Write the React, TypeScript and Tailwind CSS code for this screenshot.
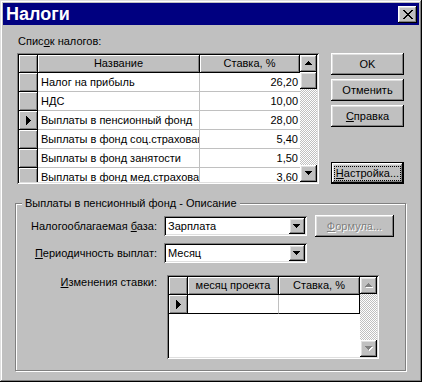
import React from "react";

const raised =
  "shadow-[inset_-1px_-1px_#000,inset_1px_1px_#fff,inset_-2px_-2px_#808080,inset_2px_2px_#dfdfdf]";
const sunken =
  "shadow-[inset_1px_1px_#808080,inset_-1px_-1px_#fff,inset_2px_2px_#000,inset_-2px_-2px_#dfdfdf]";
const fixedCell =
  "border-r border-b border-black bg-[#c0c0c0] shadow-[inset_1px_1px_#fff,inset_-1px_-1px_#808080]";
const dither = "bg-[image:repeating-conic-gradient(#fff_0_25%,#c0c0c0_0_50%)] bg-[length:2px_2px]";

const taxes = [
  ["Налог на прибыль", "26,20"],
  ["НДС", "10,00"],
  ["Выплаты в пенсионный фонд", "28,00"],
  ["Выплаты в фонд соц.страхования", "5,40"],
  ["Выплаты в фонд занятости", "1,50"],
  ["Выплаты в фонд мед.страхования", "3,60"],
];

function Arrow({ dir, disabled = false }: { dir: "up" | "down"; disabled?: boolean }) {
  const rows =
    dir === "up"
      ? [[3, 1], [2, 3], [1, 5], [0, 7]]
      : [[0, 7], [1, 5], [2, 3], [3, 1]];
  return (
    <svg width="8" height="5" viewBox="0 0 8 5" shapeRendering="crispEdges">
      {disabled &&
        rows.map(([x, w], i) => (
          <rect key={"s" + i} x={x + 1} y={i + 1} width={w} height={1} fill="#fff" />
        ))}
      {rows.map(([x, w], i) => (
        <rect key={i} x={x} y={i} width={w} height={1} fill={disabled ? "#808080" : "#000"} />
      ))}
    </svg>
  );
}

function Pointer() {
  return (
    <svg width="5" height="9" viewBox="0 0 5 9" shapeRendering="crispEdges">
      {[9, 7, 5, 3, 1].map((h, i) => (
        <rect key={i} x={i} y={i} width={1} height={h} fill="#000" />
      ))}
    </svg>
  );
}

function CloseGlyph() {
  const rows = [0, 1, 2, 3, 4, 3, 2, 1, 0];
  return (
    <svg width="10" height="9" viewBox="0 0 10 9" shapeRendering="crispEdges">
      {rows.map((x, i) => (
        <g key={i}>
          <rect x={x} y={i} width={2} height={1} fill="#000" />
          <rect x={8 - x} y={i} width={2} height={1} fill="#000" />
        </g>
      ))}
    </svg>
  );
}

function ScrollButton({ dir, disabled }: { dir: "up" | "down"; disabled?: boolean }) {
  return (
    <div className={`flex h-[17px] shrink-0 items-center justify-center bg-[#c0c0c0] ${raised}`}>
      <Arrow dir={dir} disabled={disabled} />
    </div>
  );
}

function ScrollBar({ thumb = false, disabled = false }: { thumb?: boolean; disabled?: boolean }) {
  return (
    <div className="flex w-[17px] shrink-0 flex-col">
      <ScrollButton dir="up" disabled={disabled} />
      {thumb && <div className={`h-[17px] shrink-0 bg-[#c0c0c0] ${raised}`} />}
      <div className={`flex-1 ${dither}`} />
      <ScrollButton dir="down" disabled={disabled} />
    </div>
  );
}

function Button({ children, className = "" }: { children: React.ReactNode; className?: string }) {
  return (
    <div className={`flex h-[22px] items-center justify-center bg-[#c0c0c0] ${raised} ${className}`}>
      {children}
    </div>
  );
}

function Combo({ value }: { value: string }) {
  return (
    <div className={`flex h-[20px] w-[143px] bg-white p-[2px] ${sunken}`}>
      <div className="flex flex-1 items-center pl-[2px]">{value}</div>
      <div className={`flex w-[16px] items-center justify-center bg-[#c0c0c0] ${raised}`}>
        <Arrow dir="down" />
      </div>
    </div>
  );
}

export default function App() {
  return (
    <div
      className={`flex h-[382px] w-[422px] flex-col bg-[#c0c0c0] p-[3px] font-['Liberation_Sans',Arial,sans-serif] text-[11px] leading-[13px] text-black shadow-[inset_-1px_-1px_#000,inset_1px_1px_#dfdfdf,inset_-2px_-2px_#808080,inset_2px_2px_#fff]`}
    >
      {/* title bar */}
      <div className="flex h-[22px] shrink-0 items-center justify-between bg-[#000080] pl-[3px] pr-[2px]">
        <span className="text-[18px] font-bold leading-[22px] text-white">Налоги</span>
        <div className={`flex h-[17px] w-[19px] items-center justify-center bg-[#c0c0c0] ${raised}`}>
          <CloseGlyph />
        </div>
      </div>

      <div className="flex-1 px-[12px]">
        {/* tax list */}
        <div className="ml-[2px] flex gap-[12px] pt-[10px]">
          <div className="w-[302px]">
            <div className="mb-[5px] ml-[1px]">
              Спис<u className="underline-offset-[1px]">о</u>к налогов:
            </div>
            <div className={`flex h-[131px] w-[302px] bg-white p-[2px] ${sunken}`}>
              <div className="flex flex-1 flex-col overflow-hidden">
                <div className="flex h-[18px] shrink-0">
                  <div className={`w-[19px] ${fixedCell}`} />
                  <div className={`flex w-[162px] items-center justify-center ${fixedCell}`}>Название</div>
                  <div className={`flex w-[100px] items-center justify-center ${fixedCell}`}>Ставка, %</div>
                </div>
                {taxes.map(([name, rate], i) => (
                  <div key={name} className="flex h-[19px] shrink-0">
                    <div className={`flex w-[19px] items-center justify-center ${fixedCell}`}>
                      {i === 2 && <Pointer />}
                    </div>
                    <div className="flex w-[162px] items-center overflow-hidden whitespace-nowrap border-r border-b border-[#c0c0c0] pl-[3px]">
                      {name}
                    </div>
                    <div className="flex w-[100px] items-center justify-end border-b border-[#c0c0c0] pr-[2px]">
                      {rate}
                    </div>
                  </div>
                ))}
              </div>
              <ScrollBar thumb />
            </div>
          </div>

          <div className="mt-[18px] flex h-[131px] w-[73px] flex-col">
            <Button>OK</Button>
            <Button className="mt-[4px]">Отменить</Button>
            <Button className="mt-[4px]">
              <u className="underline-offset-[1px]">С</u>правка
            </Button>
            <div className="mt-auto h-[22px] border border-black">
              <div className={`flex h-full items-center justify-center bg-[#c0c0c0] ${raised}`}>
                <span className="border border-dotted border-black px-[1px]">
                  <u className="underline-offset-[1px]">Н</u>астройка...
                </span>
              </div>
            </div>
          </div>
        </div>

        {/* description group */}
        <div className="relative mt-[19px] w-[391px] border border-[#808080] pt-[11px] pb-[11px] shadow-[inset_1px_1px_#fff,1px_1px_#fff]">
          <span className="absolute -top-[7px] left-[6px] bg-[#c0c0c0] px-[3px]">
            Выплаты в пенсионный фонд - Описание
          </span>

          <div className="flex h-[22px] items-center">
            <div className="w-[141px] text-right">
              Налогооблагаемая <u className="underline-offset-[1px]">б</u>аза:
            </div>
            <div className="ml-[7px]">
              <Combo value="Зарплата" />
            </div>
            <div
              className={`ml-[8px] flex h-[22px] w-[79px] items-center justify-center bg-[#c0c0c0] text-[#808080] [text-shadow:1px_1px_0_#fff] ${raised}`}
            >
              <u className="underline-offset-[1px]">Ф</u>ормула...
            </div>
          </div>

          <div className="mt-[5px] flex h-[22px] items-center">
            <div className="w-[141px] text-right">
              <u className="underline-offset-[1px]">П</u>ериодичность выплат:
            </div>
            <div className="ml-[7px]">
              <Combo value="Месяц" />
            </div>
          </div>

          <div className="mt-[11px] flex">
            <div className="w-[141px] pt-[1px] text-right">
              <u className="underline-offset-[1px]">И</u>зменения ставки:
            </div>
            <div className={`ml-[10px] flex h-[84px] w-[212px] bg-white p-[2px] ${sunken}`}>
              <div className="flex flex-1 flex-col overflow-hidden">
                <div className="flex h-[18px] shrink-0">
                  <div className={`w-[19px] ${fixedCell}`} />
                  <div className={`flex w-[91px] items-center justify-center ${fixedCell}`}>месяц проекта</div>
                  <div className={`flex w-[81px] items-center justify-center ${fixedCell}`}>Ставка, %</div>
                </div>
                <div className="flex h-[19px] shrink-0">
                  <div className={`flex w-[19px] items-center justify-center ${fixedCell}`}>
                    <Pointer />
                  </div>
                  <div className="w-[91px] border-r border-b border-r-[#c0c0c0] border-b-black" />
                  <div className="w-[81px] border-r border-b border-black" />
                </div>
              </div>
              <ScrollBar disabled />
            </div>
          </div>
        </div>
      </div>
    </div>
  );
}
